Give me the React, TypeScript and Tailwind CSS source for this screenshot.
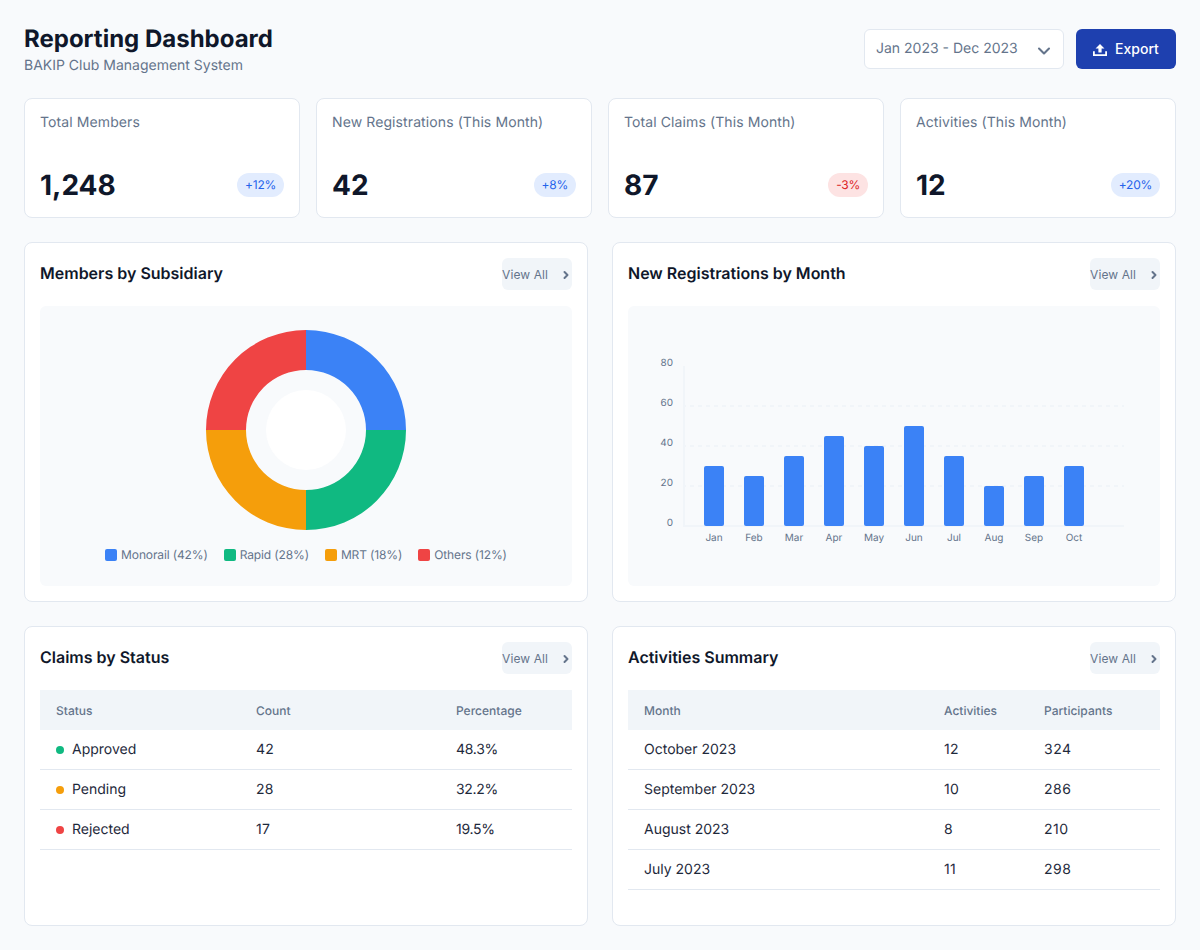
import {ChevronDown, ChevronRight} from "lucide-react";

const stats = [
    {label: "Total Members", value: "1,248", change: "+12%", up: true},
    {label: "New Registrations (This Month)", value: "42", change: "+8%", up: true},
    {label: "Total Claims (This Month)", value: "87", change: "-3%", up: false},
    {label: "Activities (This Month)", value: "12", change: "+20%", up: true},
];

const legend = [
    {name: "Monorail (42%)", color: "bg-[#3b82f6]"},
    {name: "Rapid (28%)", color: "bg-[#10b981]"},
    {name: "MRT (18%)", color: "bg-[#f59e0b]"},
    {name: "Others (12%)", color: "bg-[#ef4444]"},
];

const bars = [
    {month: "Jan", value: 30},
    {month: "Feb", value: 25},
    {month: "Mar", value: 35},
    {month: "Apr", value: 45},
    {month: "May", value: 40},
    {month: "Jun", value: 50},
    {month: "Jul", value: 35},
    {month: "Aug", value: 20},
    {month: "Sep", value: 25},
    {month: "Oct", value: 30},
];

const claims = [
    {status: "Approved", dot: "bg-[#10b981]", count: "42", pct: "48.3%"},
    {status: "Pending", dot: "bg-[#f59e0b]", count: "28", pct: "32.2%"},
    {status: "Rejected", dot: "bg-[#ef4444]", count: "17", pct: "19.5%"},
];

const activities = [
    {month: "October 2023", count: "12", people: "324"},
    {month: "September 2023", count: "10", people: "286"},
    {month: "August 2023", count: "8", people: "210"},
    {month: "July 2023", count: "11", people: "298"},
];

function CardHeader({title}: {title: string}) {
    return (
        <div className="flex justify-between items-center mb-4">
            <h2 className="text-base font-semibold text-[#0f172a] mb-0.5">{title}</h2>
            <button className="flex items-center justify-between w-[70px] h-8 pt-px rounded-md bg-[#f1f5f9] text-xs tracking-[0.1px] text-[#64748b]">
                View All
                <ChevronRight className="h-3 w-3 text-[#64748b]" strokeWidth={4} />
            </button>
        </div>
    );
}

function Donut() {
    return (
        <svg width="200" height="200" viewBox="0 0 200 200">
            <path d="M100 0A100 100 0 0 1 200 100H160A60 60 0 0 0 100 40Z" fill="#3b82f6" />
            <path d="M200 100A100 100 0 0 1 100 200V160A60 60 0 0 0 160 100Z" fill="#10b981" />
            <path d="M100 200A100 100 0 0 1 0 100H40A60 60 0 0 0 100 160Z" fill="#f59e0b" />
            <path d="M0 100A100 100 0 0 1 100 0V40A60 60 0 0 0 40 100Z" fill="#ef4444" />
            <circle cx="100" cy="100" r="40" fill="#ffffff" />
        </svg>
    );
}

function BarChart() {
    return (
        <svg width="532" height="280" viewBox="0 0 532 280">
            {[100, 140, 180].map((y) => (
                <line key={y} x1="56" x2="496" y1={y} y2={y} stroke="#f1f5f9" strokeWidth="2" strokeDasharray="4 4" strokeDashoffset="2" />
            ))}
            <path d="M56 60V220H496" fill="none" stroke="#f1f5f9" strokeWidth="2" />
            {[80, 60, 40, 20, 0].map((tick, i) => (
                <text key={tick} x="45" y={60 + i * 40} textAnchor="end" fontSize="10" fill="#64748b">
                    {tick}
                </text>
            ))}
            {bars.map((bar, i) => (
                <g key={bar.month}>
                    <rect x={76 + i * 40} y={220 - bar.value * 2} width="20" height={bar.value * 2} rx="2" fill="#3b82f6" />
                    <text x={86 + i * 40} y="235" textAnchor="middle" fontSize="10" fill="#64748b">
                        {bar.month}
                    </text>
                </g>
            ))}
        </svg>
    );
}

export default function App() {
    return (
        <div className="min-h-screen bg-[#f8fafc] p-6 font-['Inter',sans-serif] [text-rendering:geometricPrecision]">
            {/* Header */}
            <header className="flex justify-between items-center h-[50px] mb-6">
                <div className="self-start">
                    <h1 className="text-2xl leading-[30px] font-bold text-[#0f172a]">Reporting Dashboard</h1>
                    <p className="mt-0.5 text-sm text-[#64748b]">BAKIP Club Management System</p>
                </div>
                <div className="flex items-center gap-3">
                    <div className="flex items-center justify-between w-[200px] h-10 pl-[11px] pr-[9px] bg-white border border-[#e2e8f0] rounded-md text-sm text-[#64748b]">
                        Jan 2023 - Dec 2023
                        <ChevronDown className="h-5 w-5 mt-1 text-[#64748b]" strokeWidth={2.5} />
                    </div>
                    <button className="flex items-center justify-center gap-2 w-[100px] h-10 bg-[#1e40af] rounded-md text-sm font-medium text-white">
                        <svg className="mt-0.5" width="14" height="12" viewBox="0 0 14 12" fill="currentColor">
                            <path d="M7 0L11.5 4.6H8.6V8.4H5.4V4.6H2.5Z" />
                            <path d="M0 7.2H1.8V10.2H12.2V7.2H14V12H0Z" />
                        </svg>
                        Export
                    </button>
                </div>
            </header>

            {/* Stat cards */}
            <div className="grid grid-cols-4 gap-4 mb-6">
                {stats.map((stat) => (
                    <div key={stat.label} className="flex flex-col justify-between h-[120px] pt-[14px] pb-3 px-[15px] bg-white border border-[#e2e8f0] rounded-lg">
                        <div className="text-sm tracking-[0.1px] text-[#64748b]">{stat.label}</div>
                        <div className="flex justify-between items-center">
                            <span className="text-[28px] leading-10 font-bold text-[#0f172a]">{stat.value}</span>
                            <span className={stat.up ? "px-2 py-1 rounded-full bg-[#e2ecfe] text-xs tracking-[-0.25px] text-[#2563eb]" : "px-2 py-1 rounded-full bg-[#fde3e3] text-xs tracking-[-0.25px] text-[#dc2626]"}>
                                {stat.change}
                            </span>
                        </div>
                    </div>
                ))}
            </div>

            {/* Charts */}
            <div className="grid grid-cols-2 gap-6 mb-6">
                <div className="h-[360px] p-[15px] bg-white border border-[#e2e8f0] rounded-lg">
                    <CardHeader title="Members by Subsidiary" />
                    <div className="flex flex-col items-center h-[280px] pt-6 bg-[#f8fafc] rounded-md">
                        <Donut />
                        <div className="flex gap-4 mt-[17px]">
                            {legend.map((item) => (
                                <div key={item.name} className="flex items-center gap-1 text-xs tracking-[-0.13px] text-[#64748b]">
                                    <span className={`w-3 h-3 rounded-xs ${item.color}`} />
                                    {item.name}
                                </div>
                            ))}
                        </div>
                    </div>
                </div>
                <div className="h-[360px] p-[15px] bg-white border border-[#e2e8f0] rounded-lg">
                    <CardHeader title="New Registrations by Month" />
                    <div className="h-[280px] bg-[#f8fafc] rounded-md">
                        <BarChart />
                    </div>
                </div>
            </div>

            {/* Tables */}
            <div className="grid grid-cols-2 gap-6">
                <div className="h-[300px] p-[15px] bg-white border border-[#e2e8f0] rounded-lg">
                    <CardHeader title="Claims by Status" />
                    <table className="w-full table-fixed border-separate border-spacing-0">
                        <thead>
                            <tr className="h-10 bg-[#f1f5f9] text-left text-xs text-[#64748b]">
                                <th className="px-4 pt-px font-medium w-[200px]">Status</th>
                                <th className="px-4 pt-px font-medium w-[200px]">Count</th>
                                <th className="px-4 pt-px font-medium">Percentage</th>
                            </tr>
                        </thead>
                        <tbody>
                            {claims.map((row) => (
                                <tr key={row.status} className="h-10 text-sm text-[#1e293b]">
                                    <td className="px-4 border-b border-[#e2e8f0]">
                                        <div className="flex items-center gap-2">
                                            <span className={`w-2 h-2 rounded-full ${row.dot}`} />
                                            {row.status}
                                        </div>
                                    </td>
                                    <td className="px-4 border-b border-[#e2e8f0] tracking-[0.3px]">{row.count}</td>
                                    <td className="px-4 border-b border-[#e2e8f0] tracking-[-0.3px]">{row.pct}</td>
                                </tr>
                            ))}
                        </tbody>
                    </table>
                </div>
                <div className="h-[300px] p-[15px] bg-white border border-[#e2e8f0] rounded-lg">
                    <CardHeader title="Activities Summary" />
                    <table className="w-full table-fixed border-separate border-spacing-0">
                        <thead>
                            <tr className="h-10 bg-[#f1f5f9] text-left text-xs text-[#64748b]">
                                <th className="px-4 pt-px font-medium w-[300px]">Month</th>
                                <th className="px-4 pt-px font-medium w-[100px]">Activities</th>
                                <th className="px-4 pt-px font-medium">Participants</th>
                            </tr>
                        </thead>
                        <tbody>
                            {activities.map((row) => (
                                <tr key={row.month} className="h-10 text-sm text-[#1e293b]">
                                    <td className="px-4 border-b border-[#e2e8f0]">{row.month}</td>
                                    <td className="px-4 border-b border-[#e2e8f0] tracking-[0.3px]">{row.count}</td>
                                    <td className="px-4 border-b border-[#e2e8f0] tracking-[0.5px]">{row.people}</td>
                                </tr>
                            ))}
                        </tbody>
                    </table>
                </div>
            </div>
        </div>
    );
}
